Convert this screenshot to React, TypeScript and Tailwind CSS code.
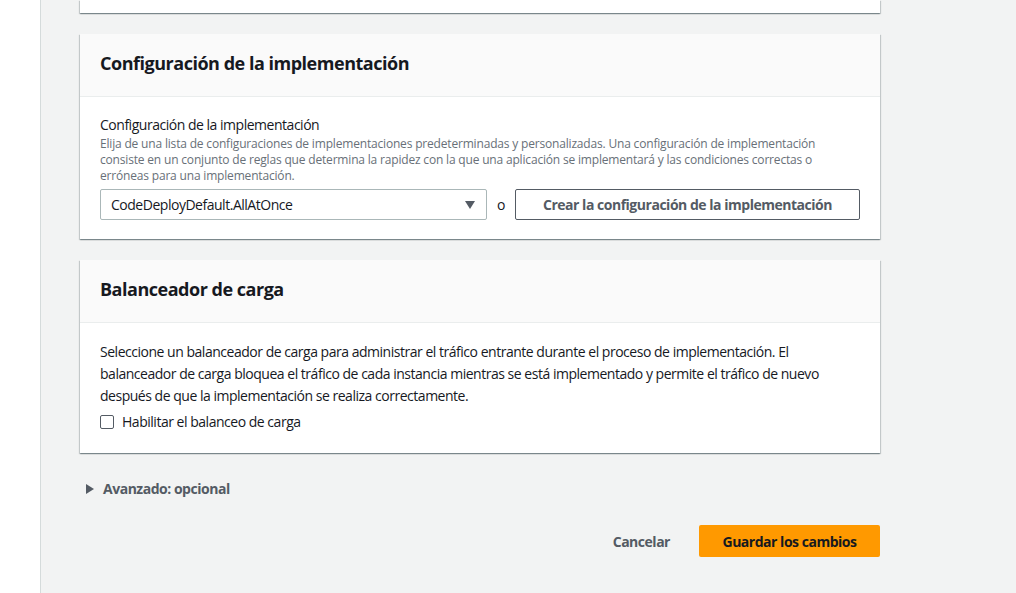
import React from "react";

const cardShadow =
  "shadow-[0_1px_1px_0_rgba(0,28,36,0.3),1px_1px_1px_0_rgba(0,28,36,0.15),-1px_1px_1px_0_rgba(0,28,36,0.15)]";

function Card({ title, children }: { title: string; children: React.ReactNode }) {
  return (
    <div className={`bg-white ${cardShadow}`}>
      <div className="h-[63px] flex items-center px-5 pb-[4px] bg-[#fafafa] border-b border-[#eaeded]">
        <h2 className="text-[18px] leading-[22px] font-bold text-[#16191f]">{title}</h2>
      </div>
      {children}
    </div>
  );
}

export default function App() {
  return (
    <div
      className="flex h-[593px] overflow-hidden bg-white text-[#16191f] tracking-[-0.03em]"
      style={{ fontFamily: '"Open Sans", "Noto Sans", sans-serif' }}
    >
      <div className="w-[41px] shrink-0 bg-white border-r border-[#d5dbdb]" />
      <div className="flex-1 bg-[#f2f3f3] pl-[39px]">
        <div className="w-[800px] flex flex-col">
          <div className={`h-[13px] bg-white ${cardShadow}`} />

          <div className="mt-[21px]">
            <Card title="Configuración de la implementación">
              <div className="px-5 pt-[18px] pb-[19px]">
                <div className="text-[14px] leading-[20px]">Configuración de la implementación</div>
                <p className="text-[12px] leading-[16px] text-[#687078] mt-[1px] tracking-[-0.015em]">
                  Elija de una lista de configuraciones de implementaciones predeterminadas y personalizadas. Una
                  configuración de implementación consiste en un conjunto de reglas que determina la rapidez con la
                  que una aplicación se implementará y las condiciones correctas o erróneas para una implementación.
                </p>
                <div className="flex items-center mt-[5px]">
                  <div className="w-[387px] h-[31px] border border-[#aab7b8] rounded-[2px] flex items-center justify-between pl-[10px] pr-[10px] text-[14px]">
                    <span>CodeDeployDefault.AllAtOnce</span>
                    <svg width="12" height="10" viewBox="0 0 12 10">
                      <path d="M1 1 L11 1 L6 9 Z" fill="#545b64" />
                    </svg>
                  </div>
                  <span className="w-[28px] text-center text-[14px] text-[#16191f]">o</span>
                  <button className="w-[345px] h-[31px] border border-[#545b64] rounded-[2px] bg-white text-[14px] font-bold text-[#545b64]">
                    Crear la configuración de la implementación
                  </button>
                </div>
              </div>
            </Card>
          </div>

          <div className="mt-[21px]">
            <Card title="Balanceador de carga">
              <div className="px-5 pt-[18px] pb-[21px]">
                <p className="text-[14px] leading-[22px]">
                  Seleccione un balanceador de carga para administrar el tráfico entrante durante el proceso de
                  implementación. El balanceador de carga bloquea el tráfico de cada instancia mientras se está
                  implementado y permite el tráfico de nuevo después de que la implementación se realiza
                  correctamente.
                </p>
                <label className="flex items-center gap-[8px] mt-[5px] text-[14px] leading-[20px]">
                  <span className="w-[14px] h-[14px] border border-[#545b64] rounded-[2px] bg-white" />
                  Habilitar el balanceo de carga
                </label>
              </div>
            </Card>
          </div>

          <div className="flex items-center gap-[9px] mt-[25px] pl-[6px] text-[14px] font-bold text-[#545b64]">
            <svg width="8" height="10" viewBox="0 0 8 10">
              <path d="M0 0 L8 5 L0 10 Z" fill="#545b64" />
            </svg>
            <span>Avanzado: opcional</span>
          </div>

          <div className="flex justify-end items-center mt-[26px]">
            <button className="text-[14px] font-bold text-[#545b64] px-[10px] mr-[19px]">Cancelar</button>
            <button className="w-[181px] h-[32px] bg-[#ff9900] rounded-[2px] text-[14px] font-bold text-[#16191f]">
              Guardar los cambios
            </button>
          </div>
        </div>
      </div>
    </div>
  );
}
